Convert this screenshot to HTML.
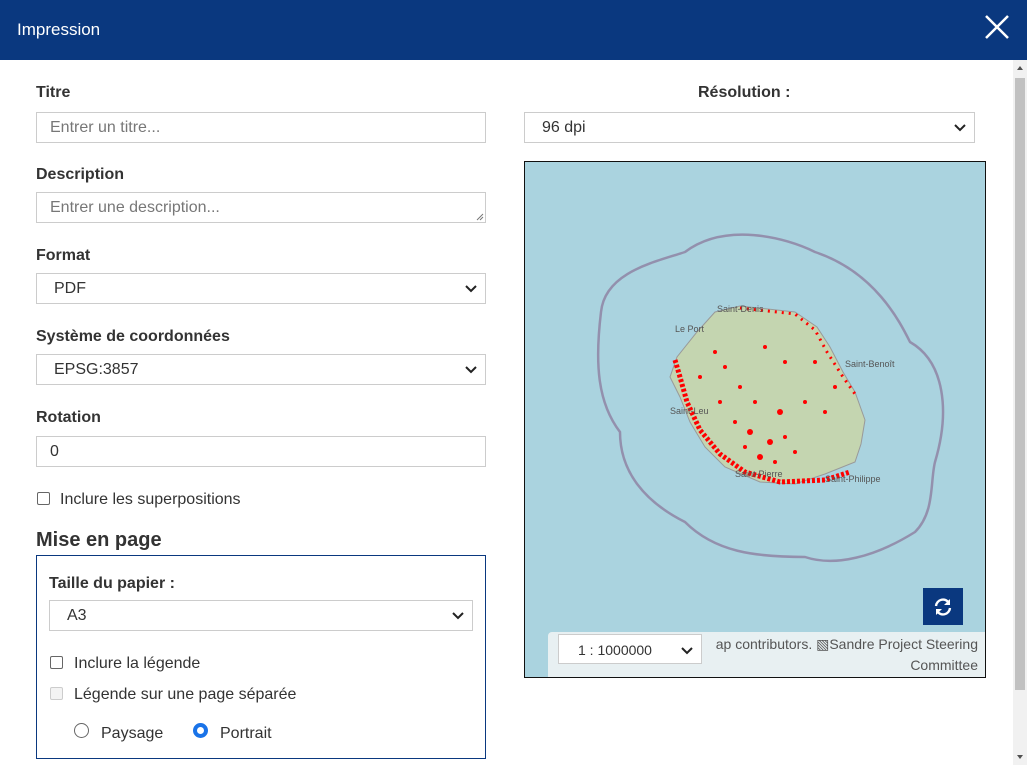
<!DOCTYPE html>
<html><head><meta charset="utf-8"><style>
*{box-sizing:border-box;margin:0;padding:0}
body{width:1027px;height:765px;overflow:hidden;background:#fff;font-family:"Liberation Sans",sans-serif;color:#333;position:relative}
.hdr{position:absolute;left:0;top:0;width:1027px;height:60px;background:#0a387f;color:#fff;font-size:17px}
.hdr span{position:absolute;left:17px;top:20px}
.a{position:absolute}
.lbl{font-weight:bold;font-size:16px;color:#333}
.inp{position:absolute;border:1px solid #ccc;background:#fff;font-size:16px;color:#333;padding-left:13px;line-height:30px;height:31px}
.ph{color:#777}
.sel{padding-left:17px}
.chev{position:absolute;right:8px;top:9px;width:12px;height:12px}
.cb{position:absolute;width:13px;height:13px;border:1px solid #666;border-radius:2px;background:#fff}
.t{position:absolute;font-size:16px;color:#333}
</style></head><body>
<div class="hdr"><span>Impression</span>
<svg class="a" style="left:984px;top:14px" width="26" height="26" viewBox="0 0 26 26"><path d="M2 2L24 24M24 2L2 24" stroke="#fff" stroke-width="2.5"/></svg></div>
<div class="a" style="left:1013px;top:60px;width:14px;height:705px;background:#f1f1f1"></div>
<div class="a" style="left:1015px;top:78px;width:10px;height:612px;background:#c1c1c1"></div>
<svg class="a" style="left:1015px;top:64px" width="10" height="8"><path d="M2 6L5 2L8 6Z" fill="#505050"/></svg>
<svg class="a" style="left:1015px;top:753px" width="10" height="8"><path d="M2 2L5 6L8 2Z" fill="#505050"/></svg>

<div class="a lbl" style="left:36px;top:84px">Titre</div>
<div class="inp" style="left:36px;top:112px;width:450px"><span class="ph">Entrer un titre...</span></div>
<div class="a lbl" style="left:36px;top:166px">Description</div>
<div class="inp" style="left:36px;top:192px;width:450px"><span class="ph">Entrer une description...</span>
<svg class="a" style="right:1px;bottom:1px" width="8" height="8"><path d="M1 7L7 1M4 7L7 4" stroke="#777"/></svg></div>
<div class="a lbl" style="left:36px;top:247px">Format</div>
<div class="inp sel" style="left:36px;top:273px;width:450px">PDF<svg class="chev" viewBox="0 0 12 12"><path d="M1 3L6 8L11 3" stroke="#222" stroke-width="2" fill="none"/></svg></div>
<div class="a lbl" style="left:36px;top:328px">Système de coordonnées</div>
<div class="inp sel" style="left:36px;top:354px;width:450px">EPSG:3857<svg class="chev" viewBox="0 0 12 12"><path d="M1 3L6 8L11 3" stroke="#222" stroke-width="2" fill="none"/></svg></div>
<div class="a lbl" style="left:36px;top:409px">Rotation</div>
<div class="inp" style="left:36px;top:436px;width:450px">0</div>
<div class="cb" style="left:37px;top:492px"></div><div class="t" style="left:60px;top:491px">Inclure les superpositions</div>
<div class="a" style="left:36px;top:529px;font-size:20px;font-weight:bold;color:#333">Mise en page</div>
<div class="a" style="left:36px;top:555px;width:450px;height:204px;border:1px solid #0a387f"></div>
<div class="a lbl" style="left:49px;top:575px">Taille du papier :</div>
<div class="inp sel" style="left:49px;top:600px;width:424px">A3<svg class="chev" viewBox="0 0 12 12"><path d="M1 3L6 8L11 3" stroke="#222" stroke-width="2" fill="none"/></svg></div>
<div class="cb" style="left:50px;top:656px"></div><div class="t" style="left:74px;top:655px">Inclure la légende</div>
<div class="cb" style="left:50px;top:687px;border-color:#ccc;background:#f3f3f3"></div><div class="t" style="left:74px;top:686px">Légende sur une page séparée</div>
<div class="a" style="left:74px;top:723px;width:15px;height:15px;border:1px solid #666;border-radius:50%"></div><div class="t" style="left:101px;top:725px">Paysage</div>
<div class="a" style="left:193px;top:723px;width:15px;height:15px;border:4px solid #1a73e8;border-radius:50%;background:#fff"></div><div class="t" style="left:220px;top:725px">Portrait</div>

<div class="a lbl" style="left:698px;top:84px">Résolution :</div>
<div class="inp sel" style="left:524px;top:112px;width:451px">96 dpi<svg class="chev" viewBox="0 0 12 12"><path d="M1 3L6 8L11 3" stroke="#222" stroke-width="2" fill="none"/></svg></div>

<div class="a" style="left:524px;top:161px;width:462px;height:517px;border:1px solid #111;background:#aad3df;overflow:hidden">
<svg class="a" style="left:0;top:0" width="462" height="517">
<path d="M76 150C80 110 130 100 160 90C200 60 260 75 290 90C350 110 375 160 385 180C420 200 425 250 410 300C405 320 410 350 390 370C350 395 310 405 280 395C230 395 190 390 160 360C120 340 95 310 95 270C72 240 70 200 76 150Z" fill="none" stroke="#8d7fa0" stroke-width="2.5" opacity=".8"/>
<path d="M190 150L215 144L270 150L292 165L305 185L318 210L330 230L340 258L336 282L330 300L300 312L270 322L235 320L200 305L180 285L165 260L155 235L145 215L152 195L172 170Z" fill="#c4d5b0" stroke="#999" stroke-width="1"/>
<path d="M150 198L155 215L162 240L175 268L195 292L220 310L255 320L300 318L325 310" fill="none" stroke="#f00" stroke-width="5" stroke-dasharray="3 2"/>
<path d="M215 146L270 152L290 168L302 190L318 215L330 232" fill="none" stroke="#f00" stroke-width="3" stroke-dasharray="2 5"/>
<g fill="#f00">
<circle cx="190" cy="190" r="2"/><circle cx="200" cy="205" r="2"/><circle cx="215" cy="225" r="2"/><circle cx="230" cy="240" r="2"/><circle cx="210" cy="260" r="2"/><circle cx="225" cy="270" r="3"/><circle cx="245" cy="280" r="3"/><circle cx="260" cy="275" r="2"/><circle cx="270" cy="290" r="2"/><circle cx="235" cy="295" r="3"/><circle cx="250" cy="300" r="2"/><circle cx="280" cy="240" r="2"/><circle cx="300" cy="250" r="2"/><circle cx="310" cy="225" r="2"/><circle cx="260" cy="200" r="2"/><circle cx="240" cy="185" r="2"/><circle cx="175" cy="215" r="2"/><circle cx="195" cy="240" r="2"/><circle cx="290" cy="200" r="2"/><circle cx="255" cy="250" r="3"/><circle cx="220" cy="285" r="2"/></g>
<g fill="#555" font-size="9" font-family="Liberation Sans"><text x="192" y="150">Saint-Denis</text><text x="150" y="170">Le Port</text><text x="320" y="205">Saint-Benoît</text><text x="145" y="252">Saint-Leu</text><text x="210" y="315">Saint-Pierre</text><text x="300" y="320">Saint-Philippe</text></g>
</svg>
<div class="a" style="left:398px;top:426px;width:40px;height:37px;background:#0a387f"></div>
<svg class="a" style="left:408px;top:435px" width="20" height="20" viewBox="0 0 20 20"><path d="M3 9A7 7 0 0 1 16 6M17 11A7 7 0 0 1 4 14" stroke="#fff" stroke-width="2.4" fill="none"/><path d="M17 2V8H11Z M3 18V12H9Z" fill="#fff"/></svg>
<div class="a" style="left:23px;top:470px;width:440px;height:47px;background:#e8f0f2;border-radius:4px 0 0 0"></div>
<div class="a" style="left:33px;top:472px;width:144px;height:30px;background:#fff;border:1px solid #ccc;font-size:14px;padding:7px 0 0 19px">1 : 1000000<svg class="chev" style="top:10px" viewBox="0 0 12 12"><path d="M1 3L6 8L11 3" stroke="#222" stroke-width="2" fill="none"/></svg></div>
<div class="a" style="left:180px;top:472px;width:273px;text-align:right;font-size:14px;line-height:21px;color:#555">ap contributors. ▧Sandre Project Steering<br>Committee</div>
</div>
</body></html>
